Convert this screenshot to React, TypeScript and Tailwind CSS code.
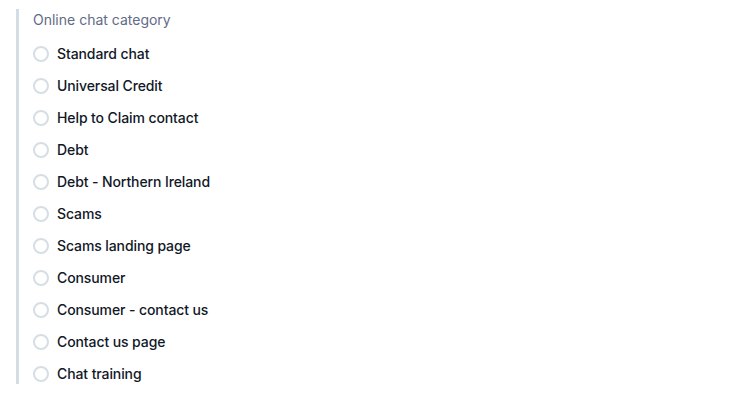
const options = [
  "Standard chat",
  "Universal Credit",
  "Help to Claim contact",
  "Debt",
  "Debt - Northern Ireland",
  "Scams",
  "Scams landing page",
  "Consumer",
  "Consumer - contact us",
  "Contact us page",
  "Chat training",
];

export default function App() {
  return (
    <div className="min-h-screen bg-white pt-[9px] pl-4 font-['Inter',sans-serif]">
      <div className="border-l-[3px] border-[#d3dde5] pl-[14px]">
        <p className="pt-px text-sm leading-5 text-[#5f6b85]">Online chat category</p>
        <div className="mt-[14px] flex flex-col gap-3">
          {options.map((o) => (
            <label key={o} className="flex h-5 items-center gap-2 text-sm font-medium tracking-[-0.1px] text-[#111827]">
              <span className="h-4 w-4 shrink-0 rounded-full border-2 border-[#d5dee6] bg-white" />
              {o}
            </label>
          ))}
        </div>
      </div>
    </div>
  );
}
